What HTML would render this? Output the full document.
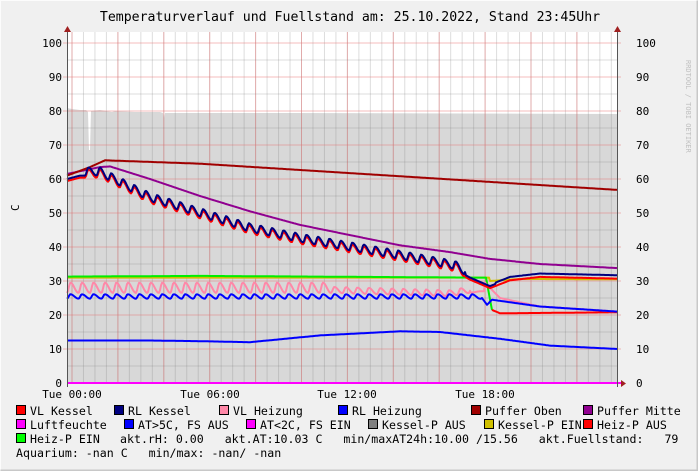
<!DOCTYPE html>
<html><head><meta charset="utf-8"><style>
body{margin:0;width:698px;height:471px;overflow:hidden;background:#f0f0f0;}
svg{display:block}
text{font-family:"DejaVu Sans Mono","Liberation Mono",monospace;white-space:pre;}
</style></head><body>
<svg id="s" width="698" height="471" viewBox="0 0 698 471">
<rect x="0" y="0" width="698" height="471" fill="#f0f0f0"/>
<path d="M0.5 470.5V0.5H697.5" stroke="#fcfcfc" fill="none"/>
<path d="M0.5 470.5H697.5V0.5" stroke="#c8c8c8" stroke-width="2" fill="none"/>
<text x="350" y="21" font-size="13.2" text-anchor="middle" fill="#000">Temperaturverlauf und Fuellstand am: 25.10.2022, Stand 23:45Uhr</text>
<text transform="translate(686,60) rotate(90)" font-size="7" fill="#c0c0c0">RRDTOOL / TOBI OETIKER</text>
<text transform="translate(19,211) rotate(-90)" font-size="11" fill="#000">C</text>
<rect x="67" y="32" width="550" height="351" fill="#fff"/>
<path id="hum" fill="#d8d8d8" d=""/>
<g id="grid"></g>
<g id="lines" fill="none" stroke-linejoin="round"></g>
<line x1="67" y1="383" x2="621" y2="383" stroke="#ff00ff" stroke-width="2"/>
<line x1="67.5" y1="28" x2="67.5" y2="387" stroke="#555"/>
<line x1="617.5" y1="28" x2="617.5" y2="387" stroke="#555"/>
<path d="M64 32L67.5 26L71 32Z" fill="#a02020"/>
<path d="M614 32L617.5 26L621 32Z" fill="#a02020"/>
<path d="M621 380L626 383.5L621 387Z" fill="#a02020"/>
<g id="labels" font-size="11" fill="#000"></g>
<g font-size="11" fill="#000" text-anchor="middle">
<text x="72" y="398">Tue 00:00</text><text x="210" y="398">Tue 06:00</text>
<text x="347" y="398">Tue 12:00</text><text x="485" y="398">Tue 18:00</text>
</g>
<g id="leg" font-size="11.6" fill="#000"></g>
</svg>
<script>
var NS="http://www.w3.org/2000/svg";
function el(p,t,a,txt){var e=document.createElementNS(NS,t);for(var k in a)e.setAttribute(k,a[k]);if(txt!=null)e.textContent=txt;p.appendChild(e);return e;}
function Y(v){return 383-3.4*v;}
var g=document.getElementById('grid');
for(var x=72;x<617;x+=11.475){if(x>67)el(g,'line',{x1:x,y1:32,x2:x,y2:383,stroke:'rgba(120,120,120,0.25)','stroke-width':1});}
for(var x=72;x<617;x+=45.9){el(g,'line',{x1:x,y1:32,x2:x,y2:383,stroke:'rgba(230,110,110,0.45)','stroke-width':1});}
for(var v=5;v<=100;v+=10){el(g,'line',{x1:67,y1:Y(v),x2:617,y2:Y(v),stroke:'rgba(120,120,120,0.25)'});}
for(var v=10;v<=100;v+=10){el(g,'line',{x1:63,y1:Y(v),x2:621,y2:Y(v),stroke:'rgba(230,110,110,0.45)'});}
var lb=document.getElementById('labels');
for(var v=0;v<=100;v+=10){el(lb,'text',{x:62,y:Y(v)+4,'text-anchor':'end'},String(v));el(lb,'text',{x:636,y:Y(v)+4},String(v));}
var h="M67 383L67 108L72 109L80 110L86 110L88 112L89 150L90 150L91 111L100 110L112 112L115 111L135 112L160 112L163 113L164 118L165 113L200 113L240 113L290 113L617 114L617 383Z";
document.getElementById('hum').setAttribute('d',h);
function interp(pts,x){for(var i=1;i<pts.length;i++){if(x<=pts[i][0]){var a=pts[i-1],b=pts[i];return a[1]+(b[1]-a[1])*(x-a[0])/(b[0]-a[0]);}}return pts[pts.length-1][1];}
function saw(x,x0,x1,amp,per){if(x<x0||x>x1)return 0;var p=((x-x0)%per)/per;var q=p<0.3?p/0.3*0.5:0.5+(p-0.3)/0.7*0.5;return amp*(1-Math.cos(2*Math.PI*q))/2;}
var L=document.getElementById('lines');
function line(f,x0,x1,col,w){var d='';for(var x=x0;x<=x1;x+=1){d+=(d?'L':'M')+x+' '+Y(f(x)).toFixed(1);}el(L,'path',{d:d,stroke:col,'stroke-width':w||2});}
var kt=[[67,60],[80,61],[100,61],[150,53.5],[200,49],[250,44.5],[300,41.5],[350,39],[400,36.5],[455,33.5],[470,31],[490,28.5],[510,30.8],[540,31.8],[617,31.3]];
line(function(x){return interp([[67,12.5],[150,12.5],[200,12.3],[250,12],[320,14],[400,15.2],[440,15],[500,13],[550,11],[617,10]],x);},67,617,'#0000ff');
line(function(x){return x<490?31:interp([[490,30],[520,30.6],[617,30.5]],x);},67,617,'#d0c000');
line(function(x){return x<486?interp([[67,31.3],[200,31.5],[480,31]],x):(x<492?31-(x-486)*1.6:21.5);},67,492,'#00ee00');
line(function(x){return interp([[492,21.5],[500,20.5],[617,20.8]],x);},492,617,'#ff0000');
line(function(x){if(x<485)return interp([[67,26.5],[330,26.5],[450,25.5],[480,27]],x)+saw(x,67,470,x<330?3:1.8,11.475);return interp([[485,29.5],[500,25],[540,22.5],[617,21]],x);},67,617,'#ff88a8');
line(function(x){if(x<482)return 24.8+saw(x,67,480,1.3,11.475);return interp([[482,25],[487,23],[492,24.5],[540,22.5],[617,21]],x);},67,617,'#0000ff');
line(function(x){return interp([[67,61.5],[100,63.5],[110,63.7],[150,60],[200,55],[250,50.5],[300,46.5],[350,43.5],[400,40.5],[450,38.5],[490,36.5],[540,35],[617,33.8]],x);},67,617,'#900090');
line(function(x){return interp([[67,61],[90,63.5],[105,65.5],[200,64.5],[617,56.8]],x);},67,617,'#a00000');
line(function(x){return interp(kt,x)-0.6+saw(x,85,465,2.4,11.475);},67,617,'#ff0000');
line(function(x){return interp(kt,x)+saw(x,85,465,2.4,11.475)+(x>495?0.4:0);},67,617,'#000080');
var lg=document.getElementById('leg');
function item(bx,y,col,t){el(lg,'rect',{x:bx+0.5,y:y-9.5,width:9,height:9,fill:col,stroke:'#000','stroke-width':1});el(lg,'text',{x:bx+14,y:y},t);}
item(16,415,'#ff0000','VL Kessel');item(114,415,'#000080','RL Kessel');item(219,415,'#ff88a8','VL Heizung');
item(338,415,'#0000ff','RL Heizung');item(471,415,'#a00000','Puffer Oben');item(583,415,'#900090','Puffer Mitte');
item(16,429,'#ff00ff','Luftfeuchte');item(124,429,'#0000ff','AT>5C, FS AUS');item(246,429,'#ff00ff','AT<2C, FS EIN');
item(368,429,'#808080','Kessel-P AUS');item(484,429,'#d0c000','Kessel-P EIN');item(583,429,'#ff0000','Heiz-P AUS');
item(16,443,'#00ff00','Heiz-P EIN');
el(lg,'text',{x:120,y:443},'akt.rH: 0.00   akt.AT:10.03 C   min/maxAT24h:10.00 /15.56   akt.Fuellstand:   79');
el(lg,'text',{x:16,y:457},'Aquarium: -nan C   min/max: -nan/ -nan');
</script>
</body></html>
